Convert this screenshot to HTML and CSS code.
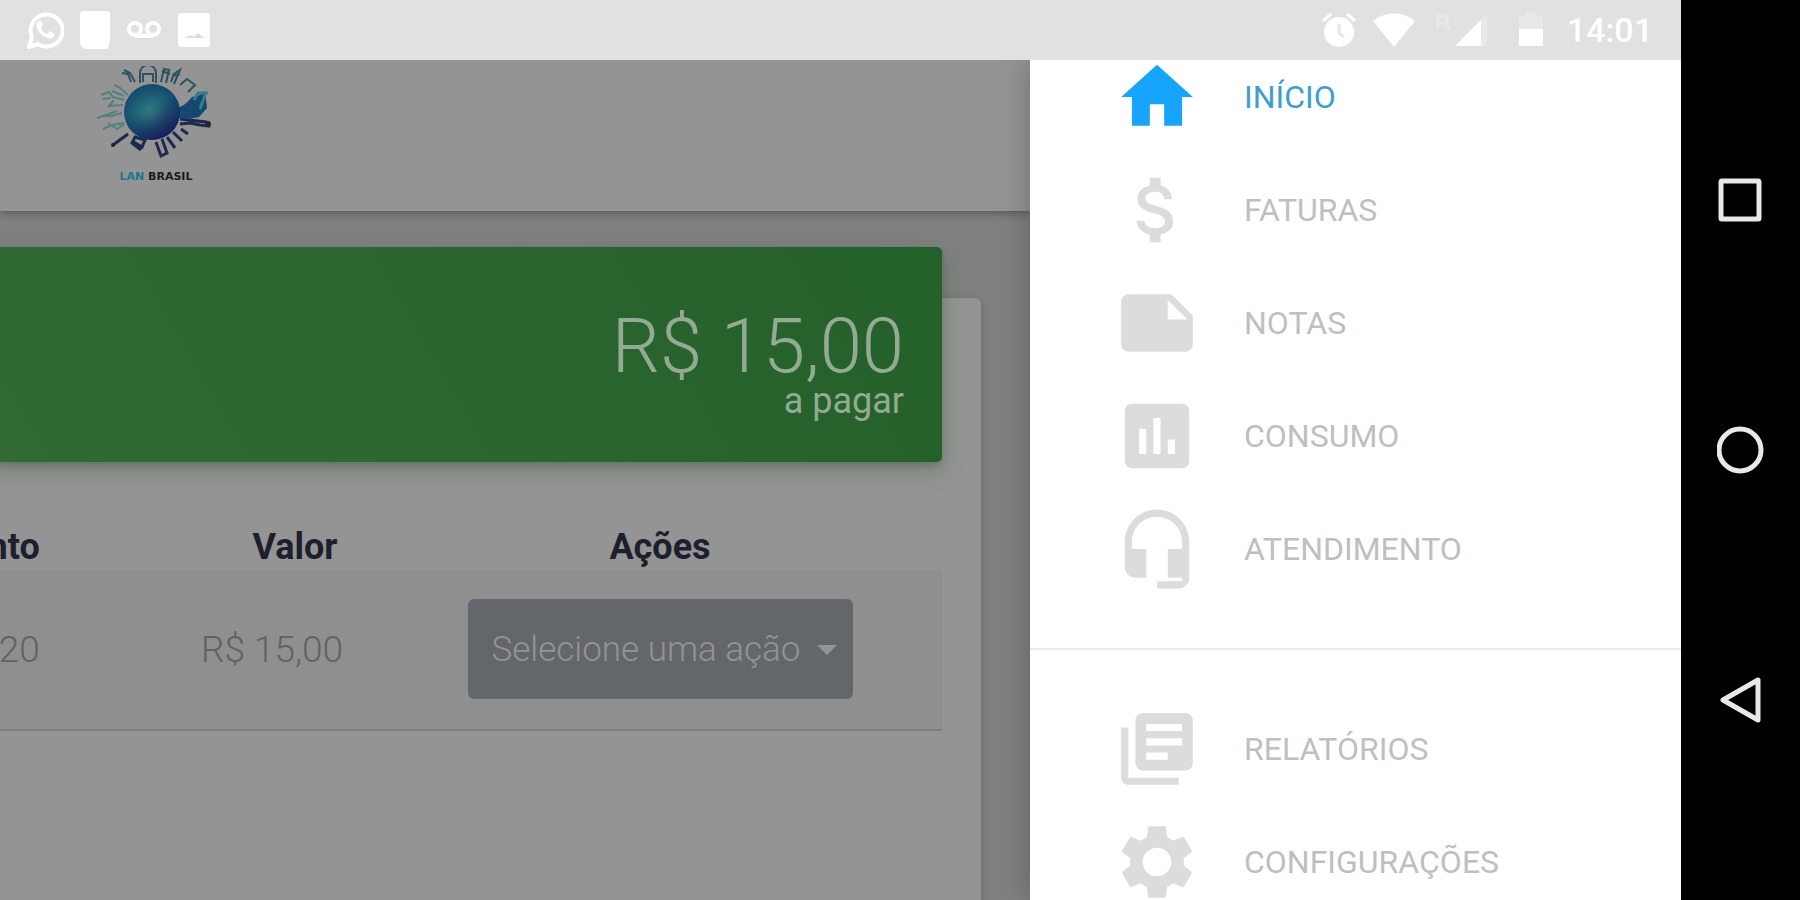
FILE: index.html
```html
<!DOCTYPE html>
<html lang="pt-BR">
<head>
    <meta charset="UTF-8">
    <meta name="viewport" content="width=device-width, initial-scale=1.0">
    <title>Central do Assinante</title>
    <link rel="stylesheet" href="styles.css">
</head>
<body>
    <div class="screen">
        <div class="status-bar">
            <div class="status-left">
                <svg class="status-icon" width="38" height="40" viewBox="0 0 38 40">
                    <path d="M3 37l3-10a16 16 0 1 1 6 7z" fill="none" stroke="#fff" stroke-width="4" stroke-linejoin="round"/>
                    <path d="M13 11c-4 2-3 8 2 13s11 6 13 2c1-2 0-3-4-5l-3 3c-3-1-5-3-6-6l2-3c-1-3-2-5-4-4z" fill="#fff"/>
                </svg>
                <svg class="status-icon" width="30" height="38" viewBox="0 0 30 38">
                    <path d="M3 0h24a3 3 0 0 1 3 3v26l-2 9H4l-4-5V3a3 3 0 0 1 3-3z" fill="#fff"/>
                </svg>
                <svg class="status-icon" width="36" height="20" viewBox="0 0 36 20">
                    <g fill="none" stroke="#fff" stroke-width="4">
                        <circle cx="9" cy="9" r="6"/>
                        <circle cx="27" cy="9" r="6"/>
                        <path d="M9 16h18"/>
                    </g>
                </svg>
                <svg class="status-icon" width="32" height="34" viewBox="0 0 32 34">
                    <rect width="32" height="34" rx="3" fill="#fff"/>
                    <path d="M7 25l5-3 4 2 4-4 6 5z" fill="#dcdcdc"/>
                </svg>
            </div>
            <div class="status-right">
                <svg width="36" height="36" viewBox="0 0 36 36">
                    <circle cx="18" cy="20" r="15" fill="#fff"/>
                    <path d="M2 9l8-7M34 9l-8-7" stroke="#fff" stroke-width="3"/>
                    <path d="M18 12v9l5 4" fill="none" stroke="#e8e8e8" stroke-width="3"/>
                </svg>
                <svg width="42" height="34" viewBox="0 0 42 34">
                    <path d="M0 8C12-2 30-2 42 8L21 34z" fill="#fff"/>
                </svg>
                <svg width="56" height="36" viewBox="0 0 56 36">
                    <path d="M7 18V4h6c5 0 5 7 0 7H7m6 0l6 7" fill="none" stroke="#e8e8e8" stroke-width="3"/>
                    <path d="M56 2v32H24z" fill="#e8e8e8"/>
                    <path d="M50 8v26H24z" fill="#fff"/>
                </svg>
                <svg class="battery" width="24" height="36" viewBox="0 0 24 36">
                    <path d="M0 4h7V0h10v4h7v14H0z" fill="#e8e8e8"/>
                    <path d="M0 17h24v17H0z" fill="#fff"/>
                </svg>
                <span class="clock">14:01</span>
            </div>
        </div>

        <div class="content">
            <div class="page">
                <header class="header">
                    <div class="logo">
                        <svg width="120" height="98" viewBox="0 0 120 98">
                            <defs>
                                <radialGradient id="globe" cx="50%" cy="55%" r="55%">
                                    <stop offset="0" stop-color="#3b8484"/>
                                    <stop offset="0.5" stop-color="#1f6577"/>
                                    <stop offset="1" stop-color="#14486c"/>
                                </radialGradient>
                                <linearGradient id="shade" x1="0" y1="0" x2="0.6" y2="1">
                                    <stop offset="0.5" stop-color="#17265c" stop-opacity="0"/>
                                    <stop offset="1" stop-color="#17205c"/>
                                </linearGradient>
                            </defs>
                            <!-- buildings around the globe -->
                            <g fill="none" stroke="#2b5260" stroke-width="2">
                                <path d="M28 4l6 3 5 9M26 7l6 1 3 8M44 17V7a7 7 0 0 1 16 0v10M47 16V8h10v8"/>
                                <path d="M65 16l3-13 5 1-3 13M75 16l3-8 6-4-6 14M66 5l8 3M76 10l8-2"/>
                                <path d="M84 19l7-6 8 6-7 7"/>
                            </g>
                            <g fill="none" stroke="#557f80" stroke-width="2">
                                <path d="M18 19l5 2 9 8M16 25l12 5M5 29l8-3 4 5 11 3M7 33l8-1M18 34l-5 6 14-1"/>
                                <path d="M1 52l12-4 8-3M5 50h10l11-3M7 63l9-4 12-2M12 57l9 6 7-5"/>
                            </g>
                            <g fill="none" stroke="#1c2950" stroke-width="3">
                                <path d="M17 79l15-11M36 75l10 6 3-7-10-3-3 6 9 7M60 76l5 14 6-3-5-14M71 71l8 11M77 66l9 9M85 63l7 5"/>
                                <path d="M84 53l26 3 2 4-8-1-10-2-10 1"/>
                            </g>
                            <path d="M78 42c8 0 13-5 18-11l8-2 5-4 2 17-8 9-10 2-12-1z" fill="#174770"/>
                            <path d="M98 34l4-7 10 0M104 43l5-14" fill="none" stroke="#33808d" stroke-width="3"/>
                            <circle cx="17" cy="79" r="2" fill="#222"/>
                            <circle cx="112" cy="58" r="3" fill="#23263b"/>
                            <circle cx="56" cy="46" r="28" fill="url(#globe)"/>
                            <circle cx="56" cy="46" r="28" fill="url(#shade)"/>
                        </svg>
                        <p class="logo-text"><span>LAN</span> BRASIL</p>
                    </div>
                </header>

                <main class="card">
                    <div class="balance">
                        <p class="balance-value">R$ 15,00</p>
                        <p class="balance-label">a pagar</p>
                    </div>
                    <div class="table-wrap">
                        <table class="bills">
                            <thead>
                                <tr>
                                    <th class="col-date">Vencimento</th>
                                    <th class="col-value">Valor</th>
                                    <th class="col-action">Ações</th>
                                </tr>
                            </thead>
                            <tbody>
                                <tr>
                                    <td class="col-date">10/06/2020</td>
                                    <td class="col-value">R$ 15,00</td>
                                    <td class="col-action">
                                        <div class="action">
                                            <select class="action-select" aria-label="Selecione uma ação">
                                                <option>Selecione uma ação</option>
                                            </select>
                                            <span class="action-caret"></span>
                                        </div>
                                    </td>
                                </tr>
                            </tbody>
                        </table>
                    </div>
                </main>
            </div>

            <nav class="drawer">
                <ul class="menu">
                    <li><a class="menu-link active" href="#">
                        <svg class="menu-icon" viewBox="0 0 24 24"><path d="M10 20v-6h4v6h5v-8h3L12 3 2 12h3v8z"/></svg>
                        INÍCIO</a></li>
                    <li><a class="menu-link" href="#">
                        <svg class="menu-icon" viewBox="0 0 24 24"><path d="M11.8 10.9c-2.27-.59-3-1.2-3-2.15 0-1.09 1.01-1.85 2.7-1.85 1.78 0 2.44.85 2.5 2.1h2.21c-.07-1.72-1.12-3.3-3.21-3.81V3h-3v2.16c-1.94.42-3.5 1.68-3.5 3.61 0 2.31 1.91 3.46 4.7 4.13 2.5.6 3 1.48 3 2.41 0 .69-.49 1.79-2.7 1.79-2.06 0-2.87-.92-2.98-2.1h-2.2c.12 2.19 1.76 3.42 3.68 3.83V21h3v-2.15c1.95-.37 3.5-1.5 3.5-3.55 0-2.84-2.43-3.81-4.7-4.4z"/></svg>
                        FATURAS</a></li>
                    <li><a class="menu-link" href="#">
                        <svg class="menu-icon" viewBox="0 0 24 24"><path fill-rule="evenodd" d="M4 4a2 2 0 0 0-2 2v12a2 2 0 0 0 2 2h16a2 2 0 0 0 2-2v-8l-6-6zM15 5.500l5.500 5.500H15z"/></svg>
                        NOTAS</a></li>
                    <li><a class="menu-link" href="#">
                        <svg class="menu-icon" viewBox="0 0 24 24"><path d="M19 3H5c-1.100 0-2 .9-2 2v14c0 1.100.9 2 2 2h14c1.100 0 2-.9 2-2V5c0-1.100-.9-2-2-2zM9 17H7v-7h2v7zm4 0h-2V7h2v10zm4 0h-2v-4h2v4z"/></svg>
                        CONSUMO</a></li>
                    <li><a class="menu-link" href="#">
                        <svg class="menu-icon" viewBox="0 0 24 24"><path d="M12 1c-4.970 0-9 4.030-9 9v7c0 1.660 1.340 3 3 3h3v-8H5v-2c0-3.870 3.130-7 7-7s7 3.130 7 7v2h-4v8h4v1h-7v2h6c1.660 0 3-1.340 3-3V10c0-4.970-4.030-9-9-9z"/></svg>
                        ATENDIMENTO</a></li>
                </ul>
                <ul class="menu menu-secondary">
                    <li><a class="menu-link" href="#">
                        <svg class="menu-icon" viewBox="0 0 24 24"><path d="M4 6H2v14c0 1.100.9 2 2 2h14v-2H4V6zm16-4H8c-1.100 0-2 .9-2 2v12c0 1.100.9 2 2 2h12c1.100 0 2-.9 2-2V4c0-1.100-.9-2-2-2zm-1 9H9V9h10v2zm-4 4H9v-2h6v2zm4-8H9V5h10v2z"/></svg>
                        RELATÓRIOS</a></li>
                    <li><a class="menu-link" href="#">
                        <svg class="menu-icon" viewBox="0 0 24 24"><path d="M19.430 12.980c.04-.32.07-.64.07-.98s-.03-.66-.07-.98l2.110-1.650c.19-.15.24-.42.12-.64l-2-3.460c-.12-.22-.39-.3-.61-.22l-2.490 1c-.52-.4-1.080-.73-1.690-.98l-.38-2.650C14.460 2.180 14.250 2 14 2h-4c-.25 0-.46.18-.49.42l-.38 2.650c-.61.25-1.170.59-1.690.98l-2.490-1c-.23-.09-.49 0-.61.22l-2 3.460c-.13.22-.07.49.12.64l2.110 1.650c-.04.32-.07.65-.07.98s.03.66.07.98l-2.110 1.650c-.19.15-.24.42-.12.64l2 3.460c.12.22.39.3.61.22l2.490-1c.52.4 1.080.73 1.690.98l.38 2.650c.03.24.24.42.49.42h4c.25 0 .46-.18.49-.42l.38-2.650c.61-.25 1.170-.59 1.690-.98l2.490 1c.23.09.49 0 .61-.22l2-3.460c.12-.22.07-.49-.12-.64l-2.110-1.650zM12 16c-2.200 0-4-1.800-4-4s1.800-4 4-4 4 1.800 4 4-1.800 4-4 4z"/></svg>
                        CONFIGURAÇÕES</a></li>
                </ul>
            </nav>
        </div>
    </div>

    <div class="system-nav">
        <button class="system-btn" aria-label="Recentes">
            <svg width="48" height="48" viewBox="0 0 48 48"><rect x="4" y="5" width="38" height="38" rx="1"/></svg>
        </button>
        <button class="system-btn" aria-label="Tela inicial">
            <svg width="48" height="48" viewBox="0 0 48 48"><circle cx="23" cy="24" r="21"/></svg>
        </button>
        <button class="system-btn" aria-label="Voltar">
            <svg width="48" height="48" viewBox="0 0 48 48"><path d="M41 4v40L6 24z"/></svg>
        </button>
    </div>
</body>
</html>
```
FILE: styles.css
```css
:root {
    --primary-color: #17a5fc;
    --surface: #949494;
    --page-bg: #808080;
    --icon-color: #dcdcdc;
    --menu-text: #bfbfbf;
}

* {
    margin: 0;
    padding: 0;
    box-sizing: border-box;
}

body {
    display: flex;
    height: 100vh;
    overflow: hidden;
    font-family: Roboto, "Liberation Sans", sans-serif;
    background-color: #000;
}

svg {
    display: block;
}

.screen {
    flex: 1;
    min-width: 0;
    display: flex;
    flex-direction: column;
}

/* Status bar */
.status-bar {
    display: flex;
    justify-content: space-between;
    align-items: center;
    height: 60px;
    flex-shrink: 0;
    padding: 0 28px 0 26px;
    background-color: #e1e1e1;
    color: #fff;
}

.status-left,
.status-right {
    display: flex;
    align-items: center;
    gap: 16px;
}

.battery {
    margin: 0 8px 0 16px;
}

.clock {
    font-size: 34px;
    font-weight: 500;
    line-height: 40px;
}

.content {
    flex: 1;
    min-height: 0;
    display: grid;
    grid-template-columns: minmax(0, 1fr) 651px;
}

/* Page behind the drawer */
.page {
    background-color: var(--page-bg);
    overflow: hidden;
}

.header {
    height: 151px;
    padding: 6px 96px;
    background-color: var(--surface);
    box-shadow: 0 2px 8px rgba(0, 0, 0, 0.35);
}

.logo {
    width: 120px;
}

.logo-text {
    font-family: "DejaVu Sans", sans-serif;
    font-size: 11px;
    font-weight: bold;
    line-height: 26px;
    text-align: center;
    color: #1a1a24;
}

.logo-text span {
    color: #1d7590;
}

.card {
    display: flex;
    flex-direction: column;
    min-height: 900px;
    margin: 87px 49px 0 -10px;
    padding-right: 39px;
    border-radius: 6px;
    background-color: var(--surface);
    box-shadow: 0 2px 8px rgba(0, 0, 0, 0.2);
}

.balance {
    margin-top: -51px;
    height: 215px;
    padding: 62px 38px 0;
    border-radius: 5px;
    background: linear-gradient(60deg, #326a34, #24602a);
    box-shadow: 0 8px 24px rgba(40, 90, 40, 0.3), 0 4px 6px rgba(0, 0, 0, 0.15);
    color: #93ab93;
    font-weight: 300;
    text-align: right;
}

.balance-value {
    font-size: 76px;
    line-height: 74px;
}

.balance-label {
    font-size: 36px;
    font-weight: 400;
    line-height: 36px;
}

.table-wrap {
    display: flex;
    justify-content: flex-end;
    margin-top: 61px;
    overflow: hidden;
}

.bills {
    flex-shrink: 0;
    table-layout: fixed;
    border-collapse: collapse;
    text-align: center;
}

.bills th {
    height: 48px;
    font-size: 36px;
    font-weight: 700;
    line-height: 48px;
    color: #1c202c;
}

.bills td {
    height: 159px;
    padding-bottom: 2px;
    border-bottom: 2px solid #7f7f7f;
    background-color: #8f8f8f;
    color: #626262;
    font-size: 37px;
    font-weight: 300;
}

.col-date {
    width: 494px;
}

.col-value {
    width: 210px;
}

td.col-value {
    padding-right: 46px;
}

.col-action {
    width: 542px;
    padding-right: 22px;
}

.action {
    position: relative;
    display: inline-block;
    vertical-align: middle;
}

.action-select {
    display: block;
    width: 385px;
    height: 100px;
    padding: 0 24px;
    border: none;
    border-radius: 6px;
    appearance: none;
    background-color: #63676b;
    color: #929496;
    font-family: inherit;
    font-size: 35px;
    font-weight: 300;
}

.action-caret {
    position: absolute;
    top: 46px;
    right: 16px;
    border-top: 10px solid #929496;
    border-left: 10px solid transparent;
    border-right: 10px solid transparent;
    pointer-events: none;
}

/* Side menu */
.drawer {
    background-color: #fff;
    box-shadow: 0 0 30px rgba(0, 0, 0, 0.25);
    clip-path: inset(0 0 0 -60px);
    overflow: hidden;
}

.menu {
    list-style: none;
    margin-top: -20px;
}

.menu-secondary {
    margin-top: 43px;
    padding-top: 42px;
    border-top: 2px solid #ebebeb;
}

.menu-link {
    display: flex;
    align-items: center;
    gap: 44px;
    height: 113px;
    padding-left: 84px;
    font-size: 32px;
    color: var(--menu-text);
    text-decoration: none;
}

.menu-icon {
    width: 86px;
    height: 86px;
    fill: var(--icon-color);
}

.active {
    color: #3d9fcd;
}

.active .menu-icon {
    fill: var(--primary-color);
}

/* Android navigation keys */
.system-nav {
    display: flex;
    flex-direction: column;
    align-items: center;
    justify-content: center;
    gap: 202px;
    width: 119px;
    flex-shrink: 0;
    background-color: #000;
}

.system-btn {
    border: none;
    background: none;
}

.system-btn svg {
    fill: none;
    stroke: #e8e8e8;
    stroke-width: 5;
    stroke-linejoin: round;
}
```
